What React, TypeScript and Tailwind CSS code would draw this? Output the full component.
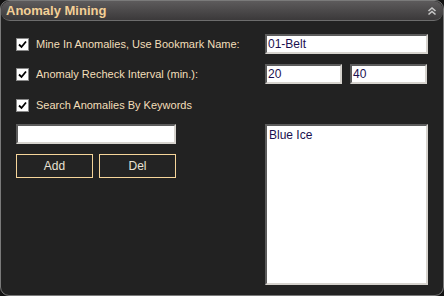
import { useState } from "react";

const font = { fontFamily: '"Liberation Sans", Arial, sans-serif' };

function Check({ label }: { label: string }) {
  return (
    <label className="flex items-center gap-[7px] text-[11px] text-[#f3dfba]">
      <span className="flex h-[13px] w-[13px] items-center justify-center border border-[#8a8a8a] bg-white">
        <svg viewBox="0 0 9 9" className="h-[9px] w-[9px]">
          <path d="M1 4.5 L3.5 7 L8 1.5" fill="none" stroke="#000" strokeWidth="1.8" />
        </svg>
      </span>
      {label}
    </label>
  );
}

function Field({ value, className }: { value: string; className: string }) {
  return (
    <div
      className={`flex h-[20px] items-center border-2 border-t-[#5c5c5c] border-l-[#5c5c5c] border-r-[#d6d3ce] border-b-[#d6d3ce] bg-white px-[1px] text-[12px] text-[#1a1050] ${className}`}
    >
      {value}
    </div>
  );
}

function Btn({ label }: { label: string }) {
  return (
    <button
      type="button"
      className="h-[24px] w-[77px] border border-[#f6d59a] bg-[#232323] text-[12px] text-[#e8e2d4]"
    >
      {label}
    </button>
  );
}

export default function App() {
  const [items] = useState(["Blue Ice"]);
  return (
    <div className="h-[296px] w-[444px] bg-[#121212]" style={font}>
      <div className="flex h-[296px] flex-col rounded-[9px] border border-[#7a7a7a] bg-[#222222]">
        <div className="flex h-[20px] items-center justify-between rounded-[9px] border-b border-[#6d6d6d] bg-gradient-to-b from-[#5d5b5c] to-[#3b393a] pl-[5px] pr-[6px]">
          <span className="text-[13px] font-bold text-[#f3cf96]">Anomaly Mining</span>
          <svg viewBox="0 0 10 10" className="h-[10px] w-[10px]">
            <path d="M1.5 5 L5 2 L8.5 5 M1.5 8.5 L5 5.5 L8.5 8.5" fill="none" stroke="#c8c8c8" strokeWidth="1.6" />
          </svg>
        </div>
        <div className="flex flex-col pl-[15px] pt-[13px]">
          <div className="flex h-[20px] items-center">
            <div className="w-[249px]">
              <Check label="Mine In Anomalies, Use Bookmark Name:" />
            </div>
            <Field value="01-Belt" className="w-[163px]" />
          </div>
          <div className="mt-[10px] flex h-[20px] items-center">
            <div className="w-[249px]">
              <Check label="Anomaly Recheck Interval (min.):" />
            </div>
            <div className="flex gap-[8px]">
              <Field value="20" className="w-[77px]" />
              <Field value="40" className="w-[77px]" />
            </div>
          </div>
          <div className="mt-[11px] flex h-[20px] items-center">
            <Check label="Search Anomalies By Keywords" />
          </div>
          <div className="mt-[9px] flex">
            <div className="flex w-[249px] flex-col">
              <Field value="" className="w-[160px]" />
              <div className="mt-[10px] flex gap-[6px]">
                <Btn label="Add" />
                <Btn label="Del" />
              </div>
            </div>
            <div className="h-[161px] w-[163px] border-2 border-t-[#5c5c5c] border-l-[#5c5c5c] border-r-[#d6d3ce] border-b-[#d6d3ce] bg-white px-[2px] text-[12px] text-[#1a1050]">
              {items.map((i) => (
                <div key={i}>{i}</div>
              ))}
            </div>
          </div>
        </div>
      </div>
    </div>
  );
}
